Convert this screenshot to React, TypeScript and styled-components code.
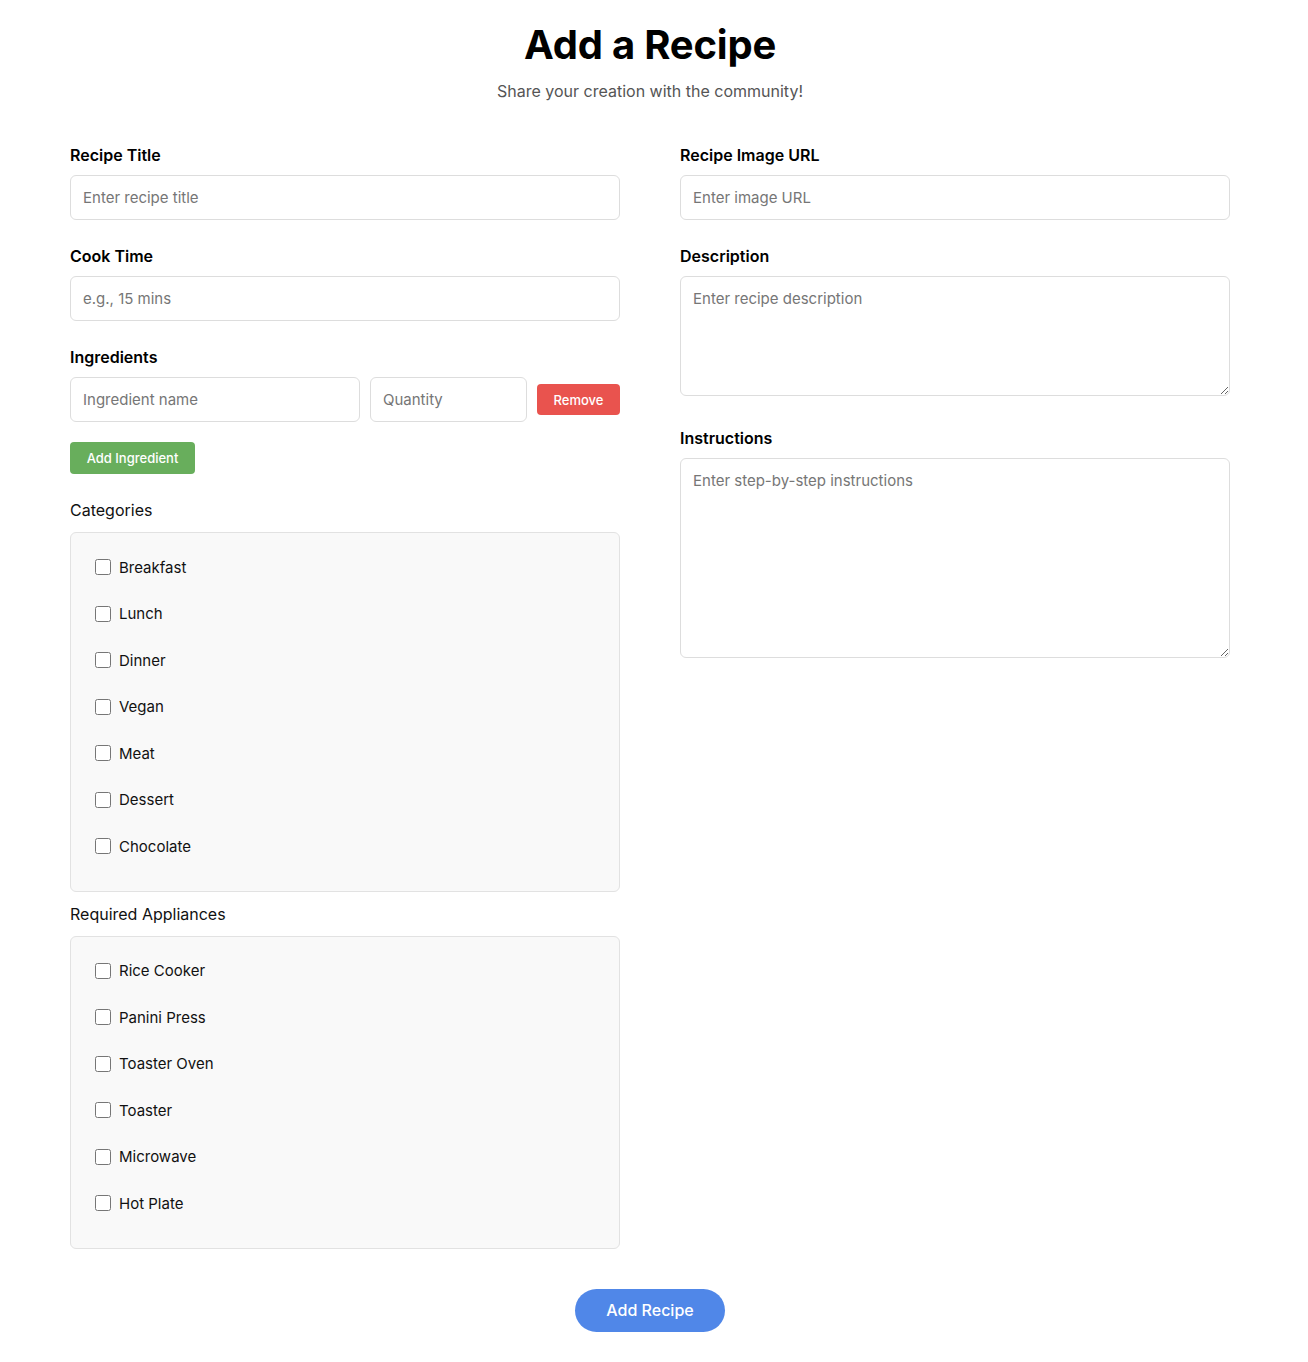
import React from "react";
import styled, { createGlobalStyle } from "styled-components";

const Global = createGlobalStyle`
  html, body { margin: 0; padding: 0; background: #ffffff; }
  body { font-family: Inter, "Noto Sans", "Liberation Sans", sans-serif; color: #111; }
  * { box-sizing: border-box; }
`;

const Page = styled.div`
  width: 1300px;
  padding: 21px 0 30px;
`;

const Container = styled.form`
  width: 1160px;
  margin: 0 auto;
`;

const Title = styled.h1`
  margin: 0;
  text-align: center;
  font-size: 40px;
  line-height: 48px;
  font-weight: 700;
  color: #000;
  letter-spacing: -0.2px;
`;

const Subtitle = styled.p`
  margin: 10px 0 42px;
  text-align: center;
  font-size: 16px;
  line-height: 24px;
  color: #555;
`;

const Columns = styled.div`
  display: grid;
  grid-template-columns: 550px 550px;
  column-gap: 60px;
  align-items: start;
`;

const Column = styled.div`
  display: flex;
  flex-direction: column;
`;

const Field = styled.div<{ $gap?: number }>`
  display: flex;
  flex-direction: column;
  margin-bottom: ${(p) => p.$gap ?? 26}px;
`;

const Label = styled.label`
  font-size: 16px;
  line-height: 20px;
  font-weight: 600;
  color: #000;
  margin-bottom: 10px;
`;

const PlainLabel = styled.div`
  font-size: 16px;
  line-height: 20px;
  font-weight: 400;
  color: #111;
  margin-bottom: 12px;
`;

const inputBase = `
  font-family: Inter, "Noto Sans", "Liberation Sans", sans-serif;
  font-size: 15px;
  color: #222;
  border: 1px solid #dddddd;
  border-radius: 6px;
  background: #fff;
  padding: 0 12px;
  outline: none;
  &::placeholder { color: #767676; }
`;

const TextInput = styled.input<{ $width?: number }>`
  ${inputBase}
  height: 45px;
  width: ${(p) => (p.$width ? `${p.$width}px` : "100%")};
`;

const TextArea = styled.textarea<{ $height: number }>`
  ${inputBase}
  display: block;
  width: 100%;
  height: ${(p) => p.$height}px;
  padding: 12px;
  line-height: 20px;
  resize: vertical;
`;

const IngredientRow = styled.div`
  display: flex;
  align-items: center;
  gap: 10px;
  margin-bottom: 20px;
`;

const SmallButton = styled.button<{ $bg: string }>`
  font-family: Inter, "Noto Sans", "Liberation Sans", sans-serif;
  font-size: 13px;
  font-weight: 500;
  color: #fff;
  background: ${(p) => p.$bg};
  border: none;
  border-radius: 4px;
  cursor: pointer;
`;

const RemoveButton = styled(SmallButton)`
  width: 83px;
  height: 31px;
`;

const AddIngredientButton = styled(SmallButton)`
  width: 125px;
  height: 32px;
  align-self: flex-start;
  margin-bottom: 26px;
`;

const CheckBox = styled.div`
  background: #f9f9f9;
  border: 1px solid #e2e2e2;
  border-radius: 6px;
  padding: 11px 24px 21px;
  display: flex;
  flex-direction: column;
  margin-bottom: 12px;
`;

const CheckItem = styled.label`
  height: 46.5px;
  display: flex;
  align-items: center;
  gap: 8px;
  font-size: 15px;
  color: #111;
`;

const Check = styled.input`
  width: 16px;
  height: 16px;
  margin: 0;
`;

const SubmitRow = styled.div`
  display: flex;
  justify-content: center;
  margin-top: 28px;
`;

const SubmitButton = styled.button`
  font-family: Inter, "Noto Sans", "Liberation Sans", sans-serif;
  width: 150px;
  height: 43px;
  border: none;
  border-radius: 22px;
  background: #5087e8;
  color: #fff;
  font-size: 16px;
  font-weight: 500;
  cursor: pointer;
`;

const categories = ["Breakfast", "Lunch", "Dinner", "Vegan", "Meat", "Dessert", "Chocolate"];
const appliances = ["Rice Cooker", "Panini Press", "Toaster Oven", "Toaster", "Microwave", "Hot Plate"];

function CheckGroup({ items }: { items: string[] }) {
  return (
    <CheckBox>
      {items.map((it) => (
        <CheckItem key={it}>
          <Check type="checkbox" />
          {it}
        </CheckItem>
      ))}
    </CheckBox>
  );
}

export default function App() {
  return (
    <Page>
      <Global />
      <Container onSubmit={(e) => e.preventDefault()}>
        <Title>Add a Recipe</Title>
        <Subtitle>Share your creation with the community!</Subtitle>
        <Columns>
          <Column>
            <Field>
              <Label>Recipe Title</Label>
              <TextInput placeholder="Enter recipe title" />
            </Field>
            <Field>
              <Label>Cook Time</Label>
              <TextInput placeholder="e.g., 15 mins" />
            </Field>
            <Field $gap={0}>
              <Label>Ingredients</Label>
              <IngredientRow>
                <TextInput $width={290} placeholder="Ingredient name" />
                <TextInput $width={157} placeholder="Quantity" />
                <RemoveButton type="button" $bg="#e9534e">Remove</RemoveButton>
              </IngredientRow>
            </Field>
            <AddIngredientButton type="button" $bg="#68ae5c">Add Ingredient</AddIngredientButton>
            <PlainLabel>Categories</PlainLabel>
            <CheckGroup items={categories} />
            <PlainLabel>Required Appliances</PlainLabel>
            <CheckGroup items={appliances} />
          </Column>
          <Column>
            <Field>
              <Label>Recipe Image URL</Label>
              <TextInput placeholder="Enter image URL" />
            </Field>
            <Field $gap={32}>
              <Label>Description</Label>
              <TextArea $height={120} placeholder="Enter recipe description" />
            </Field>
            <Field>
              <Label>Instructions</Label>
              <TextArea $height={200} placeholder="Enter step-by-step instructions" />
            </Field>
          </Column>
        </Columns>
        <SubmitRow>
          <SubmitButton type="submit">Add Recipe</SubmitButton>
        </SubmitRow>
      </Container>
    </Page>
  );
}
